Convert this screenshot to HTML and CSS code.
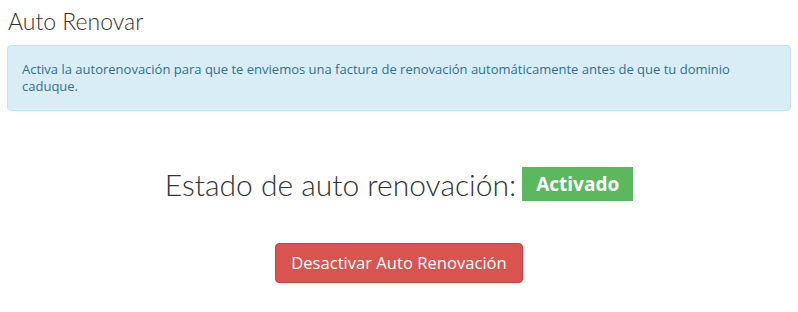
FILE: index.html
```html
<!DOCTYPE html>
<html lang="es">

<head>
    <meta charset="UTF-8">
    <meta name="viewport" content="width=device-width, initial-scale=1.0">
    <title>Auto Renovar</title>
    <link rel="stylesheet" href="styles.css">
</head>

<body>
    <div class="page">
        <h3 class="title">Auto Renovar</h3>

        <div class="alert-info">
            Activa la autorenovación para que te enviemos una factura de renovación automáticamente antes de que tu dominio caduque.
        </div>

        <div class="status">
            <h2 class="status-text">
                Estado de auto renovación:
                <span class="label-on">Activado</span>
            </h2>
            <button class="btn-danger" type="button">Desactivar Auto Renovación</button>
        </div>
    </div>
</body>

</html>
```

FILE: styles.css
```css
* {
    margin: 0;
    padding: 0;
    box-sizing: border-box;
}

body {
    font-family: 'Open Sans', sans-serif;
    font-size: 13px;
    color: #333;
    background: #fff;
}

.page {
    padding: 0 7px;
}

.title {
    font-family: 'Lato', sans-serif;
    font-weight: 300;
    font-size: 23px;
    line-height: 24px;
    padding: 9px 1px 0;
    margin-bottom: 12px;
    color: #333;
}

.alert-info {
    background: #d9edf7;
    border: 1px solid #bce8f1;
    color: #31708f;
    border-radius: 4px;
    padding: 15px 14px;
    line-height: 17px;
}

.status {
    display: flex;
    flex-direction: column;
    align-items: center;
    padding-top: 56px;
}

.status-text {
    font-family: 'Lato', sans-serif;
    font-weight: 300;
    font-size: 30px;
    line-height: 34px;
    color: #333;
    display: flex;
    align-items: center;
    gap: 6px;
}

.label-on {
    display: inline-block;
    background: #5cb85c;
    color: #fff;
    font-family: 'Open Sans', sans-serif;
    font-weight: 700;
    font-size: 19px;
    line-height: 34px;
    padding: 0 14px;
}

.btn-danger {
    margin-top: 42px;
    font-family: 'Open Sans', sans-serif;
    font-size: 16.6px;
    line-height: 20px;
    padding: 9px 15px;
    color: #fff;
    background: #d9534f;
    border: 1px solid #d43f3a;
    border-radius: 4px;
    cursor: pointer;
}
```
